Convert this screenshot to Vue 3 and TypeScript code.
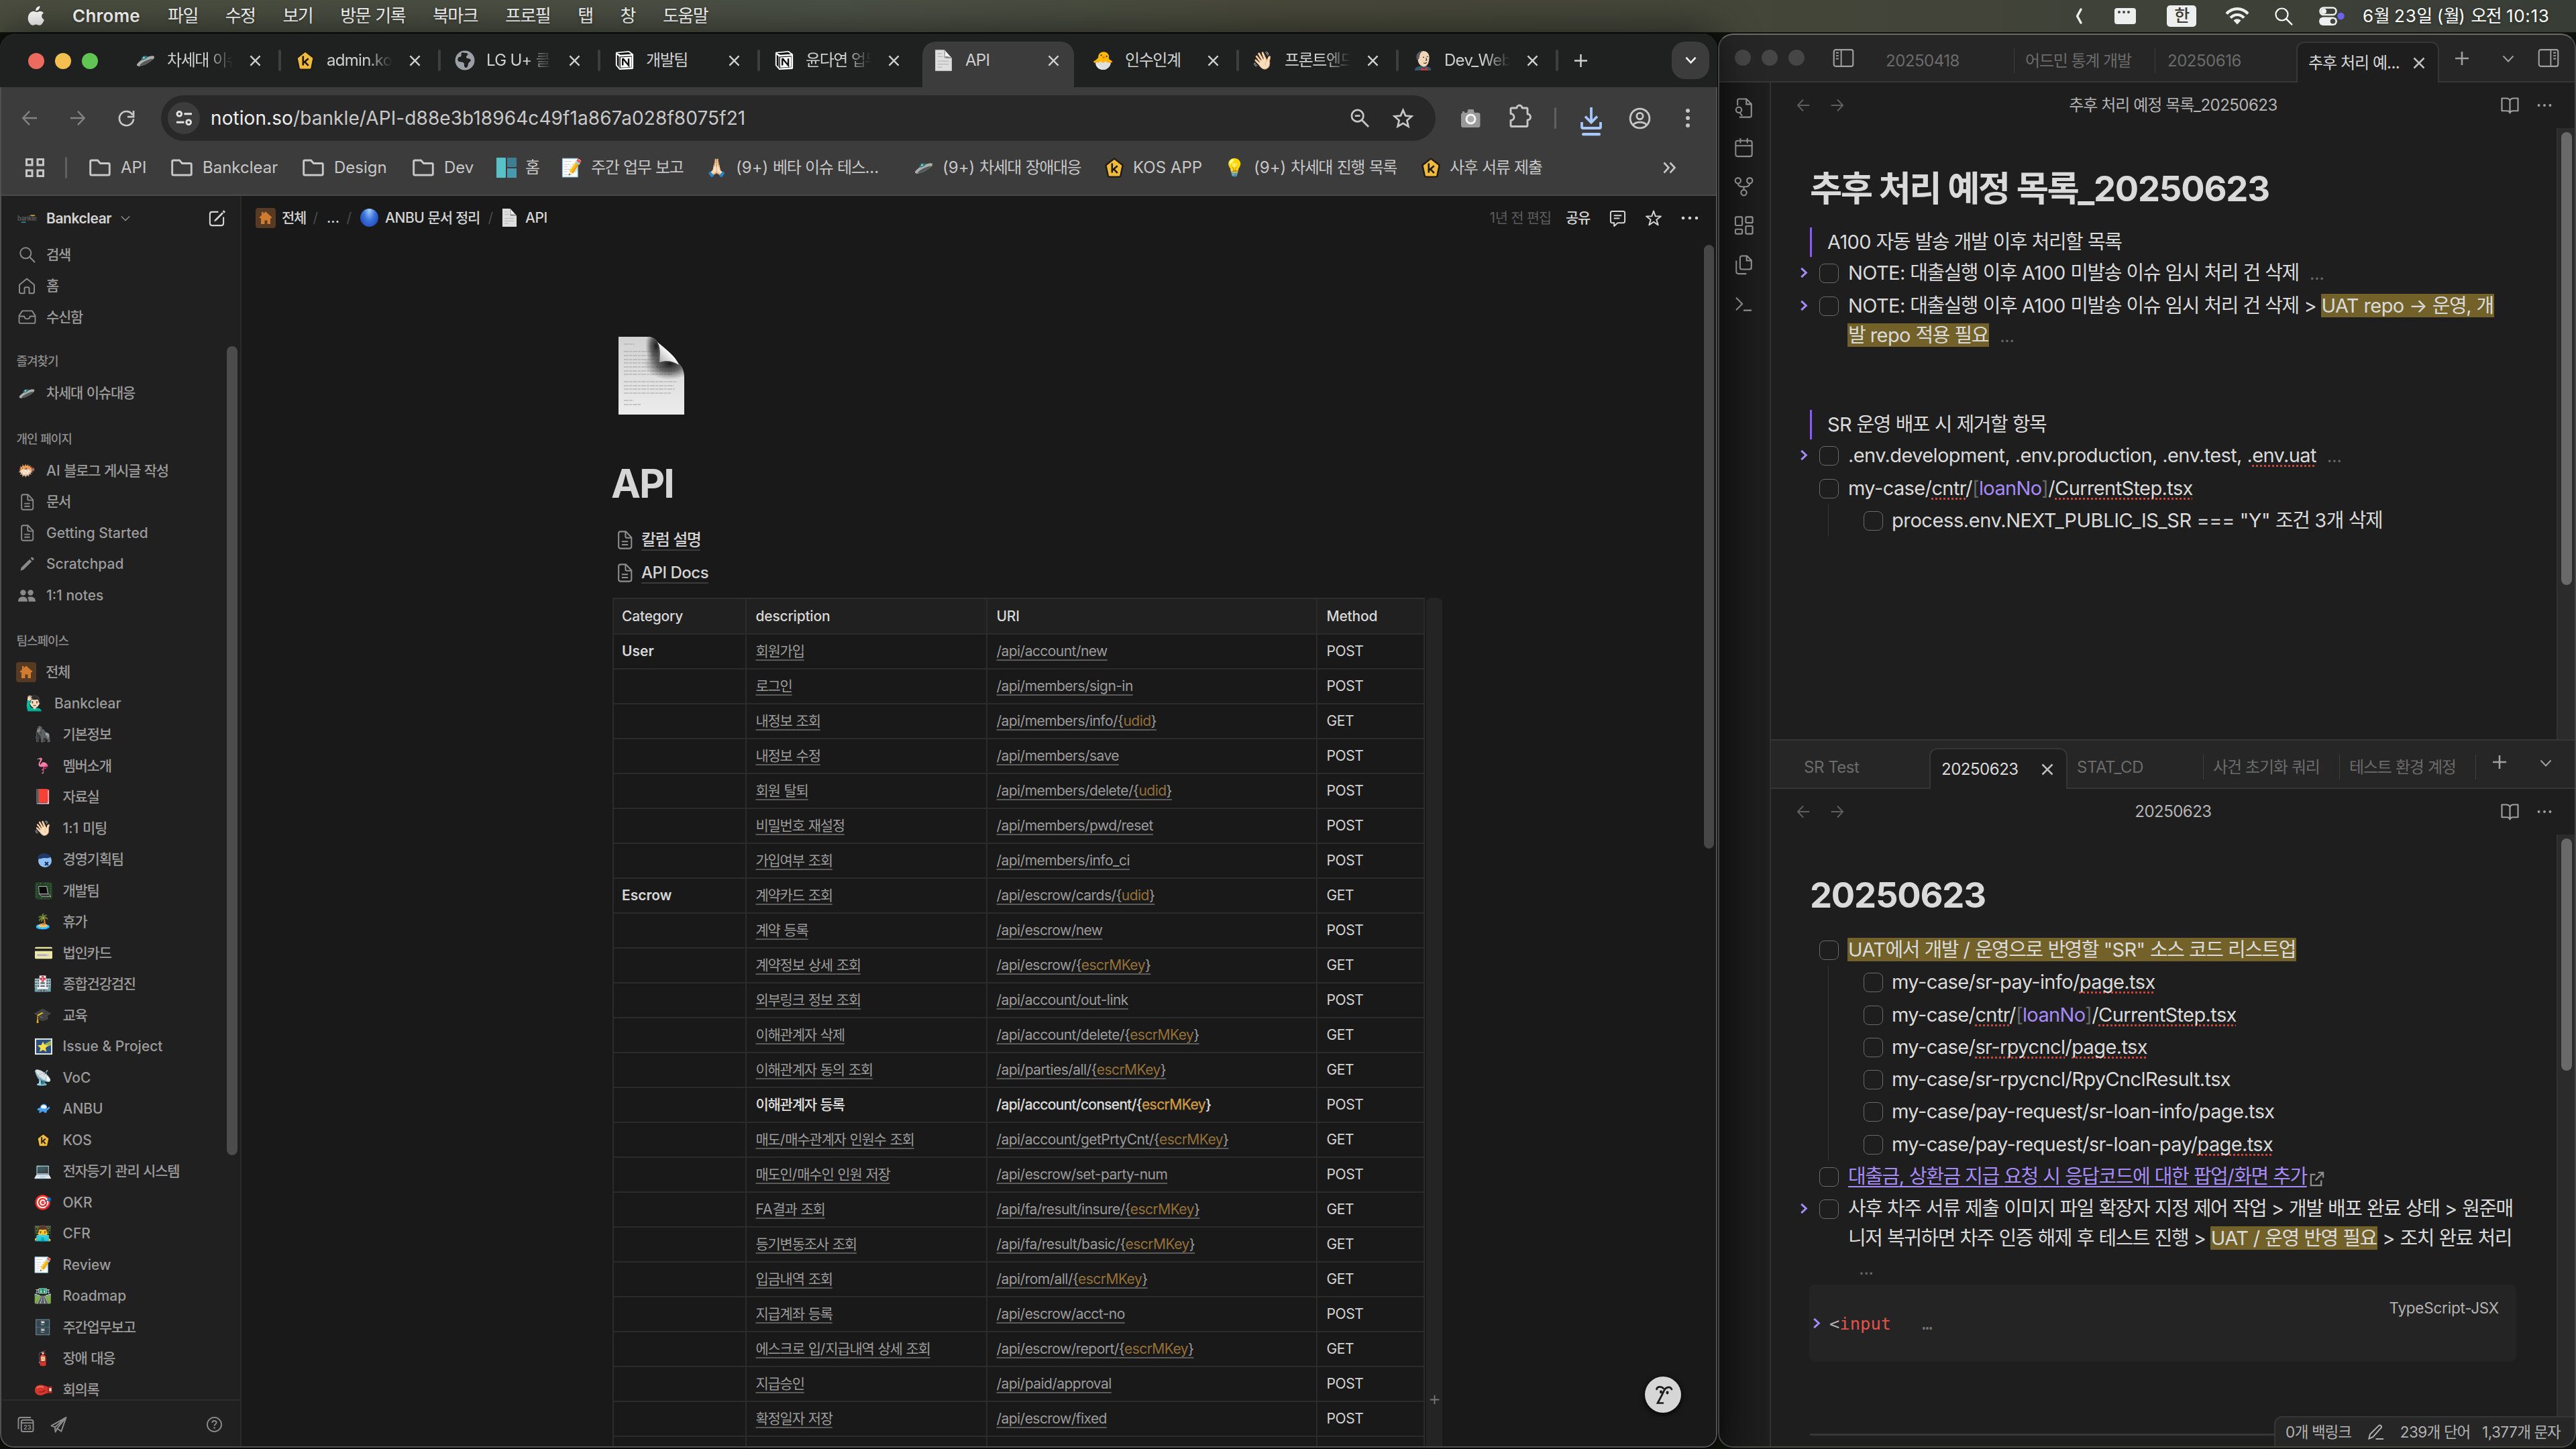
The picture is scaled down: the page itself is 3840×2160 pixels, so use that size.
<script setup lang="ts">
import { h, type FunctionalComponent } from 'vue'

/* Splits a string into Hangul and Latin runs so each script gets its own tracking. */
const Tx: FunctionalComponent<{ t: string }> = (props) =>
  h(
    'span',
    { class: 'tx' },
    (props.t.match(/[가-힣]+|[^가-힣]+/g) ?? []).map((run) =>
      /[가-힣]/.test(run) ? h('span', { class: 'ko' }, run) : run,
    ),
  )
Tx.props = ['t']

const icons: Record<string, [string, string]> = {
  apple: ['0 0 26 32', '<path fill="#fff" d="M18.6 1c.2 2-.6 3.900-1.800 5.200-1.200 1.400-3 2.400-4.700 2.300-.2-1.900.7-3.900 1.800-5.100C15.100 2 17.100 1.100 18.600 1zM24.500 11.500c-1.900 1.200-3 2.900-3 5.100 0 2.500 1.500 4.700 3.800 5.500-.5 1.600-1.300 3.200-2.300 4.700-1.400 2-2.800 4-5 4-2.100 0-2.800-1.300-5.300-1.300s-3.300 1.300-5.400 1.300c-2.100 0-3.600-2.100-5-4.100C-.7 22.400-.2 15 3.300 11.500c1.500-1.600 3.500-2.500 5.400-2.500 2.100 0 3.500 1.300 5.200 1.300 1.700 0 2.800-1.300 5.300-1.300 2 0 4 1 5.300 2.500z"/>'],
  mchev: ['0 0 12 24', '<path d="M9 2 3.500 12 9 22" fill="none" stroke="#eee" stroke-width="3.400" stroke-linecap="round" stroke-linejoin="round"/>'],
  mwin: ['0 0 32 26', '<rect x="0" y="1" width="32" height="24" rx="4" fill="#eee"/><circle cx="7" cy="7" r="2" fill="#444"/><circle cx="14" cy="7" r="2" fill="#444"/><circle cx="21" cy="7" r="2" fill="#444"/>'],
  wifi: ['0 0 36 26', '<g fill="none" stroke="#eee" stroke-width="4.200"><path d="M2 9.500C11-.3 25-.3 34 9.500"/><path d="M8 15.500c5.700-6 14.300-6 20 0"/></g><path d="M12.500 19.500c3.200-3 7.800-3 11 0L18 25.500z" fill="#eee"/>'],
  search: ['0 0 28 28', '<circle cx="11.500" cy="11.500" r="9" fill="none" stroke="currentColor" stroke-width="2.200"/><path d="m18.300 18.300 8 8" stroke="currentColor" stroke-width="2.400" stroke-linecap="round"/>'],
  control: ['0 0 38 28', '<rect x="1.500" y="1.500" width="24" height="10.500" rx="5.200" fill="none" stroke="#eee" stroke-width="2.600"/><circle cx="7" cy="6.800" r="4" fill="#eee"/><rect x="0" y="15.500" width="27" height="12.500" rx="6.200" fill="#eee"/><circle cx="20.500" cy="21.700" r="3.800" fill="#444"/><circle cx="32.500" cy="14" r="5.200" fill="#6b62f0"/>'],
  x: ['0 0 18 18', '<path d="m1.500 1.500 15 15m0-15-15 15" stroke="currentColor" stroke-width="2.500" fill="none"/>'],
  plus: ['0 0 22 22', '<path d="M11 1v20M1 11h20" stroke="currentColor" stroke-width="2.600" fill="none"/>'],
  down: ['0 0 18 12', '<path d="m1.500 1.500 7.500 8 7.500-8" stroke="currentColor" stroke-width="2.800" fill="none"/>'],
  thin: ['0 0 18 12', '<path d="m1.500 1.500 7.500 8 7.500-8" stroke="currentColor" stroke-width="2" fill="none"/>'],
  left: ['0 0 26 26', '<path d="M25 13H3M13 2 2.500 13 13 24" stroke="currentColor" stroke-width="2.600" fill="none"/>'],
  right: ['0 0 26 26', '<path d="M1 13h22M13 2l10.500 11L13 24" stroke="currentColor" stroke-width="2.600" fill="none"/>'],
  reload: ['0 0 26 26', '<path d="M22.500 7.500A11 11 0 1 0 24 14" stroke="currentColor" stroke-width="2.800" fill="none"/><path d="M24 1v9.500h-9.500" stroke="currentColor" stroke-width="2.800" fill="none"/>'],
  tune: ['0 0 26 24', '<g fill="none" stroke="currentColor" stroke-width="3"><circle cx="5.500" cy="5" r="3.500"/><path d="M13 5h12M1 18h12"/><circle cx="20" cy="18" r="3.500"/></g>'],
  zoomout: ['0 0 30 30', '<g fill="none" stroke="currentColor" stroke-width="2.800"><circle cx="11" cy="11" r="9"/><path d="M7 11h8M17.500 17.500 28 28"/></g>'],
  star: ['0 0 30 30', '<path d="m15 3 3.500 8.200 8.900.8-6.700 5.900 2 8.700-7.700-4.600-7.700 4.600 2-8.700L2.600 12l8.900-.8z" fill="none" stroke="currentColor" stroke-width="2.600"/>'],
  camera: ['0 0 30 30', '<path d="M1 10c0-1.500.8-2.500 2-2.500V5h3v2h4l1.500-5h8L21 7h5.500C28 7 29.500 8 29.500 10v16c0 2-1 3-3 3H4c-2 0-3-1-3-3z" fill="#999"/><circle cx="15.500" cy="16.500" r="6.500" fill="#aaa" stroke="#f4f4f4" stroke-width="3"/>'],
  puzzle: ['0 0 34 36', '<path d="M3 7.500C3 6.500 3.500 6 4.500 6H12a4 4 0 0 1 8 0h6.500c1 0 1.500.5 1.500 1.500V15a4.500 4.500 0 0 1 0 9v8c0 1-.5 1.500-1.500 1.500h-22C3.500 33.500 3 33 3 32v-7.500a5 5 0 0 0 0-10z" fill="none" stroke="currentColor" stroke-width="2.900" stroke-linejoin="round"/>'],
  download: ['0 0 32 46', '<g fill="none" stroke="#a8c7fa" stroke-width="3.800"><path d="M16 1v22M7 14.500l9 9 9-9"/><path d="M2 23v7.500c0 1 .5 1.500 1.500 1.500h25c1 0 1.500-.5 1.500-1.500V23"/></g><rect x="2" y="39" width="28" height="4.300" rx="2" fill="#a8c7fa"/>'],
  avatar: ['0 0 34 34', '<g fill="none" stroke="currentColor" stroke-width="2.900"><circle cx="17" cy="17" r="14.800"/><circle cx="17" cy="13.500" r="4.800"/><path d="M6.500 27c5-5.500 16-5.500 21 0"/></g>'],
  kebab: ['0 0 8 30', '<g fill="currentColor"><circle cx="4" cy="4" r="3"/><circle cx="4" cy="15" r="3"/><circle cx="4" cy="26" r="3"/></g>'],
  apps: ['0 0 28 28', '<g fill="none" stroke="currentColor" stroke-width="3"><rect x="1.500" y="1.500" width="8.500" height="8.500"/><rect x="18" y="1.500" width="8.500" height="8.500"/><rect x="1.500" y="18" width="8.500" height="8.500"/><rect x="18" y="18" width="8.500" height="8.500"/></g>'],
  folder: ['0 0 32 26', '<path d="M3.500 2h9l4 4.500h12c1 0 1.800.8 1.800 1.800v13.900c0 1-.8 1.800-1.800 1.800h-25c-1 0-1.800-.8-1.800-1.800V3.800C1.700 2.800 2.500 2 3.500 2z" fill="none" stroke="currentColor" stroke-width="2.900"/>'],
  more: ['0 0 20 18', '<path d="m1.500 1.500 7 7.500-7 7.500M10.500 1.500l7 7.500-7 7.500" stroke="currentColor" stroke-width="2.600" fill="none"/>'],
  home3: ['0 0 30 30', '<rect width="14" height="30" rx="1" fill="#58c0c7"/><rect x="16" width="14" height="14" fill="#3d7e92"/><rect x="16" y="16" width="14" height="14" fill="#4699ae"/>'],
  kos: ['0 0 30 32', '<path d="M15 1.500 28.500 12 25 28.500c-.4 1.500-1.500 2-3 2H8c-1.500 0-2.600-.5-3-2L1.500 12z" fill="#f0bb3c" stroke="#1f1a12" stroke-width="2.600" stroke-linejoin="round"/><path d="M11.500 9v15M20 13l-8 7M14.500 18.500l5.500 6" stroke="#1f1a12" stroke-width="2.800" fill="none"/>'],
  globe: ['0 0 28 28', '<circle cx="14" cy="14" r="13.500" fill="#9aa0a6"/><path d="M11 3c3 1 6 0 7 2s-3 3-2 5 5 1 6 3-2 3-3 5 0 5-3 6-3-3-3-5-3-3-5-3-4-1-4-3 1-4 3-4 2-1 2-3 0-3 2-3z" fill="#1f2120"/>'],
  notion: ['0 0 32 32', '<path d="m3 3 20-2 7 5v22c0 1-.5 1.700-2 1.800L8 31l-6-7V5c0-1.200.3-1.900 1-2z" fill="#fff"/><path d="m4.500 4.500 18-1.500 4 3-17 1.200zM8 10l19.500-1.300V27L8 28.500z" fill="#111"/><path d="m4 7 3 2.500V27l-3-3.500z" fill="#111"/><path d="M9.500 11.200 27 10v16.300L9.500 27.500z" fill="#fff"/><path d="M13 24V14l1-.2L22.500 24V13" stroke="#111" stroke-width="2.600" fill="none"/>'],
  jenkins: ['0 0 28 32', '<path d="M1 32c0-4 3-6 8-7h10c5 1 8 3 8 7z" fill="#39566b"/><path d="M6 10C6 4 10 1 14.500 1S24 4 24 11c0 7-2 15-8.500 15C10 26 6 20 6 15z" fill="#f0d6b7"/><path d="M4 14C2 6 7 1 14 1 9 4 9 8 8 13l-2 2z" fill="#5a5a62"/><path d="m11 28 5 2 5-3v5h-10z" fill="#d33833"/><path d="M14 11h2m4-1h2M15 20c2 1 4 1 5-1M19 12l1 4h-2" stroke="#3a2f28" stroke-width="1.200" fill="none"/>'],
  house: ['0 0 30 30', '<rect width="30" height="30" rx="4" fill="#563a24"/><path d="M15 5.500 24.500 14l-1 1.200H22V24h-4.500v-5.500h-4V24H8v-8.800H6.500L5.500 14 9 10.800V6h2.500v2.600z" fill="#cf7c30"/>'],
  page: ['0 0 24 28', '<path d="M1 0h12l10 11v17H1z" fill="#dedede"/><path d="M12 0c2 3 1 8 1 10s6 1 10 1z" fill="#8a8a8a"/><path d="M13 0c2 3 1 6 1 9 3-1 6 0 9 2z" fill="#f6f6f6"/><path d="M4 5h6M4 9h7M4 15h15M4 19h15M4 23h6" stroke="#b5b5b5"/>'],
  doc: ['0 0 24 30', '<g fill="none" stroke="currentColor" stroke-width="2.200"><path d="M5 1.500h8.500l9 9.500v14.500c0 2-1 3-3 3H5c-2 0-3-1-3-3V4.500c0-2 1-3 3-3z"/><path d="M13 2v7.500c0 1.500.8 2 2 2h7M7 17.500h10M7 22.500h10"/></g>'],
  nhome: ['0 0 26 26', '<path d="M2 11.500 13 2.500l11 9V22c0 1.500-1 2.300-2.300 2.300H16.500V17c0-1-.5-1.700-1.500-1.700h-4c-1 0-1.500.7-1.500 1.700v7.300H4.300C3 24.300 2 23.500 2 22z" fill="none" stroke="currentColor" stroke-width="2" stroke-linejoin="round"/>'],
  inbox: ['0 0 28 24', '<path d="M6.500 2.500h15L26.500 10v9.500c0 1.500-1 2.300-2.300 2.300H3.800c-1.300 0-2.300-.8-2.300-2.300V10zM1.500 11h8c.5 3 2 4 4.500 4s4-1 4.500-4h8" fill="none" stroke="currentColor" stroke-width="2" stroke-linejoin="round"/>'],
  compose: ['0 0 26 26', '<path d="M15 3H5.500C3.500 3 2 4.500 2 6.500v14C2 22.500 3.500 24 5.500 24h14c2 0 3.500-1.500 3.500-3.500V11" fill="none" stroke="currentColor" stroke-width="2.200"/><path d="m8.500 18 1-3L21 3.500l2 2L11.500 17z" fill="currentColor"/><path d="m22.500 2.300 1-1 1.500 1.500-1 1z" stroke="currentColor" stroke-width="1.500"/>'],
  pencil: ['0 0 24 24', '<path d="m1.500 22.500 1.500-5L16.500 4l3.500 3.500L6.500 21zM18 2.500l1.500-1.500c.6-.6 1.500-.5 2 0l1.500 1.500c.6.600.6 1.500 0 2L21.500 6z" fill="currentColor"/>'],
  people: ['0 0 28 20', '<g fill="currentColor"><circle cx="8" cy="5" r="4.500"/><circle cx="20" cy="5" r="4.500"/><path d="M0 19.500C0 14 3 11.500 8 11.500c4 0 7 2.500 7 8z"/><path d="M17 19.500c0-3-.6-5-2-6.800 1.300-.8 3-1.200 5-1.200 5 0 8 2.500 8 8z"/></g>'],
  clock23: ['0 0 26 26', '<g fill="none" stroke="currentColor" stroke-width="2"><rect x="6" y="6" width="18.500" height="18" rx="3"/><path d="M21 2H5C3 2 1.500 3.500 1.500 5.500V20M6 10.500h18"/></g><text x="15.300" y="21" font-size="9.500" font-weight="700" text-anchor="middle" fill="currentColor" font-family="Inter">23</text>'],
  send: ['0 0 26 26', '<path d="M1.500 15 24.500 2 17 23.500l-6.500-4.500L8 24.500 7 17zm6 2L24 2.500 10.500 19" fill="none" stroke="currentColor" stroke-width="2" stroke-linejoin="round"/>'],
  help: ['0 0 26 26', '<circle cx="13" cy="13" r="11" fill="none" stroke="currentColor" stroke-width="1.900"/><path d="M9.700 10.500c0-2 1.500-3.200 3.300-3.200s3.300 1 3.300 2.900c0 2.300-3.300 2.300-3.300 4.800" fill="none" stroke="currentColor" stroke-width="1.900"/><circle cx="13" cy="18.300" r="1.300" fill="currentColor"/>'],
  comment: ['0 0 26 27', '<path d="M4.500 2h17c1.500 0 2.500 1 2.500 2.500v13c0 1.500-1 2.500-2.500 2.500H13l-5.500 5V20h-3C3 20 2 19 2 17.500v-13C2 3 3 2 4.500 2zM7 8.500h12M7 13h9" fill="none" stroke="currentColor" stroke-width="2.100" stroke-linejoin="round"/>'],
  nstar: ['0 0 26 26', '<path d="m13 2.500 2.700 7.800 8.200.2-6.600 5 2.400 7.900-6.700-4.700-6.700 4.700 2.400-7.900-6.600-5 8.200-.2z" fill="none" stroke="currentColor" stroke-width="2" stroke-linejoin="round"/>'],
  dots: ['0 0 26 6', '<g fill="currentColor"><circle cx="3" cy="3" r="2.300"/><circle cx="13" cy="3" r="2.300"/><circle cx="23" cy="3" r="2.300"/></g>'],
  bluecap: ['0 0 26 26', '<circle cx="15" cy="15" r="10" fill="#8fc0f5"/><path d="M4 11C6 3 17 1 24 9c-4 4-9 1-13 2.500-3 1.300-6 1-7-.5z" fill="#1f3a6b"/><path d="m15 17 5 5m0-5-5 5" stroke="#17305c" stroke-width="2.200"/>'],
  matrix: ['0 0 28 28', '<rect width="28" height="28" rx="5" fill="#27402a"/><path d="M3 2v24M9 1v5M17 1v6M21 2v24M25 2v24M10 24v4" stroke="#3f8a44" stroke-dasharray="2 2"/><path d="M6 7h13l2 12H7z" fill="#0b0b0b" stroke="#bbb"/><path d="m7 19 15 0 4 4H11z" fill="#333" stroke="#ccc" stroke-width=".8"/>'],
  card: ['0 0 28 20', '<rect width="28" height="19" rx="2" fill="#ece6a8"/><rect y="2.500" width="28" height="4" fill="#26251c"/><path d="M3 11h20v4H3z" fill="#cfcfcf"/><path d="M4 13h15" stroke="#888"/>'],
  turtle: ['0 0 26 22', '<path d="M2 12c1-3 3-3 5-3 1-5 4-7 7-7s6 2 6 7c2 1 2-3 4-2s1 5-3 6c-1 2-2 3-2 5h-4l-1-2h-4l-1 2H5l1-4c-2 0-4 0-4-2z" fill="#48a0ef"/><path d="M9 6c2-3 8-3 10 0v3c-3 2-7 2-10 0z" fill="#f3f7fb"/>'],
  ufo: ['0 0 30 24', '<ellipse cx="15" cy="13" rx="14.500" ry="4.400" transform="rotate(-27 15 13)" fill="#a9adab"/><ellipse cx="16" cy="14.800" rx="11" ry="2.200" transform="rotate(-27 16 14.800)" fill="#55595a"/><path d="M9 11.500c-1.500-5 6-8.500 9.500-4.500-2 2.500-6 4.500-9.500 4.500z" fill="#35757b"/><circle cx="12.500" cy="8" r="1.500" fill="#86d4da"/>'],
  shoot: ['0 0 28 26', '<rect width="28" height="26" fill="#f3f3ee"/><rect x="2" y="2" width="24" height="22" fill="#2a4f80"/><path d="M26 3v8l-9 3-3-4z" fill="#9fb25a"/><path d="m13 5 2.600 5.600 6.200.6-4.700 4.200 1.500 6.200-5.600-3.300-5.500 3.300 1.400-6.200L4.200 11.200l6.200-.6z" fill="#f8dc4c"/>'],
  glove: ['0 0 28 20', '<path d="M0 10C0 4 5 1.500 11 2c4 .3 6 2.500 10 2.500V15c-5 .5-7 3.500-12 3.500S0 16 0 10z" fill="#d5372c"/><path d="M3 7c3-3 8-3 11-1" stroke="#f08376" stroke-width="1.500" fill="none"/><path d="M6 13c4 1 8 0 11-3" stroke="#8e1e18" stroke-width="1.300" fill="none"/><path d="M21 4.500 27.500 4v11l-6.500.5z" fill="#b3261e"/><rect x="23" y="7" width="3.500" height="5" fill="#ddd"/>'],
  bankle: ['0 0 30 12', '<text x="0" y="9" font-size="10" font-weight="700" fill="#555" font-family="Inter" textLength="30">bankle</text><path d="M20 1h7" stroke="#d8a93a" stroke-width="1.600"/><path d="M6 11.500h7" stroke="#2f8f9f" stroke-width="1.600"/>'],
  nchev: ['0 0 16 10', '<path d="m1 1.500 7 7 7-7" stroke="currentColor" stroke-width="1.800" fill="none"/>'],
  sideL: ['0 0 32 28', '<rect x="1.200" y="1.200" width="29.600" height="25.600" rx="3" fill="none" stroke="currentColor" stroke-width="2.200"/><path d="M12.500 1v26M4.500 6h4M4.500 10.500h4M4.500 15h4" stroke="currentColor" stroke-width="2"/>'],
  sideR: ['0 0 32 28', '<rect x="1.200" y="1.200" width="29.600" height="25.600" rx="3" fill="none" stroke="currentColor" stroke-width="2.200"/><path d="M19.500 1v26M23.500 6h4M23.500 10.500h4M23.500 15h4" stroke="currentColor" stroke-width="2"/>'],
  r1: ['0 0 30 32', '<g fill="none" stroke="currentColor" stroke-width="2.200"><path d="M5 12V4c0-1.500 1-2.500 2.500-2.500H19l8 8V28c0 1.500-1 2.500-2.500 2.500H8M19 2v8h8"/><circle cx="7" cy="19" r="4.500"/><path d="m8.500 23.500 4 5"/></g>'],
  r2: ['0 0 30 32', '<g fill="none" stroke="currentColor" stroke-width="2.200"><rect x="2" y="5" width="26" height="25" rx="3"/><path d="M2 13h26M9.500 1v8M20.500 1v8"/></g>'],
  r3: ['0 0 30 30', '<g fill="none" stroke="currentColor" stroke-width="2.200"><circle cx="6" cy="6" r="4.300"/><circle cx="24" cy="6" r="4.300"/><circle cx="15" cy="24.500" r="4.300"/><path d="M6 10.500c0 4 3 5 9 5s9-1 9-5M15 15v5.500"/></g>'],
  r4: ['0 0 30 30', '<g fill="none" stroke="currentColor" stroke-width="2.200"><rect x="2" y="2" width="10.500" height="13" rx="1.500"/><rect x="18" y="2" width="10.500" height="9" rx="1.500"/><rect x="2" y="21" width="10.500" height="7" rx="1.500"/><rect x="18" y="16" width="10.500" height="12" rx="1.500"/></g>'],
  r5: ['0 0 30 32', '<g fill="none" stroke="currentColor" stroke-width="2.200"><path d="M9 5c0-2 1-3.500 3-3.500h8l7 7V20c0 2-1 3-3 3H12c-2 0-3-1-3-3zM19.500 2v7H27M3 9v17.500C3 29 4 30 6.500 30H19"/></g>'],
  r6: ['0 0 28 24', '<path d="m2 2 10 10L2 22M14 22.500h13" fill="none" stroke="currentColor" stroke-width="2.200"/>'],
  book: ['0 0 28 26', '<path d="M14 5c-1-2.500-3-3.500-5.500-3.500H1.500V21H9c3 0 4.500 1 5 3.500.5-2.500 2-3.500 5-3.500h7.500V1.500h-7C17 1.500 15 2.500 14 5zm0 0v19" fill="none" stroke="currentColor" stroke-width="2.200" stroke-linejoin="round"/>'],
  fold: ['0 0 12 18', '<path d="m2 2 7.500 7L2 16" fill="none" stroke="currentColor" stroke-width="3.200"/>'],
  ext: ['0 0 24 24', '<path d="M10 5H3v17h16v-8M14 2h8v8M22 2 10 14" fill="none" stroke="currentColor" stroke-width="2.400"/>'],
  edit: ['0 0 26 26', '<path d="M2.500 23.500 4 17 18 3c1.500-1.500 5 1.500 3.500 3.500L8.500 21zM13 24h12" fill="none" stroke="currentColor" stroke-width="2"/>'],
  face: ['0 0 54 54', '<g fill="none" stroke="#191919" stroke-width="2.700" stroke-linecap="round"><path d="M17.500 19c.5-4 7-5 10-1.500"/><path d="M40 19c-2.500-5-9-3.500-11.500 2-1.500 4-7 14-9.500 18.500h8"/></g><ellipse cx="24" cy="23" rx="2" ry="2.400" fill="#191919"/><ellipse cx="33.500" cy="24" rx="2" ry="2.400" fill="#191919"/>'],
}

const menus = ['파일', '수정', '보기', '방문 기록', '북마크', '프로필', '탭', '창', '도움말']

interface Tab { icon?: string; emoji?: string; t: string; fade?: boolean; on?: boolean; nosep?: boolean }
const tabs: Tab[] = [
  { icon: 'ufo', t: '차세대 이슈', fade: true },
  { icon: 'kos', t: 'admin.kos', fade: true },
  { icon: 'globe', t: 'LG U+ 클', fade: true },
  { icon: 'notion', t: '개발팀' },
  { icon: 'notion', t: '윤다연 업무', fade: true, nosep: true },
  { icon: 'page', t: 'API', on: true, nosep: true },
  { emoji: '🐣', t: '인수인계' },
  { emoji: '👋🏻', t: '프론트엔드', fade: true },
  { icon: 'jenkins', t: 'Dev_Web', fade: true },
]

interface Mark { icon?: string; emoji?: string; t: string; w: number }
const marks: Mark[] = [
  { icon: 'folder', t: 'API', w: 122 },
  { icon: 'folder', t: 'Bankclear', w: 196 },
  { icon: 'folder', t: 'Design', w: 164 },
  { icon: 'folder', t: 'Dev', w: 124 },
  { icon: 'home3', t: '홈', w: 98 },
  { emoji: '📝', t: '주간 업무 보고', w: 216 },
  { emoji: '🙏🏻', t: '(9+) 베타 이슈 테스...', w: 308 },
  { icon: 'ufo', t: '(9+) 차세대 장애대응', w: 284 },
  { icon: 'kos', t: 'KOS APP', w: 180 },
  { emoji: '💡', t: '(9+) 차세대 진행 목록', w: 292 },
  { icon: 'kos', t: '사후 서류 제출', w: 200 },
]

interface Nav { icon?: string; emoji?: string; t: string; lv?: number }
const personal: Nav[] = [
  { emoji: '🐡', t: 'AI 블로그 게시글 작성' },
  { icon: 'doc', t: '문서' },
  { icon: 'doc', t: 'Getting Started' },
  { icon: 'pencil', t: 'Scratchpad' },
  { icon: 'people', t: '1:1 notes' },
]
const team: Nav[] = [
  { icon: 'house', t: '전체', lv: 0 },
  { emoji: '🙋🏻‍♂️', t: 'Bankclear', lv: 1 },
  { emoji: '🦍', t: '기본정보', lv: 2 },
  { emoji: '🦩', t: '멤버소개', lv: 2 },
  { emoji: '📕', t: '자료실', lv: 2 },
  { emoji: '👋🏻', t: '1:1 미팅', lv: 2 },
  { icon: 'bluecap', t: '경영기획팀', lv: 2 },
  { icon: 'matrix', t: '개발팀', lv: 2 },
  { emoji: '🏝️', t: '휴가', lv: 2 },
  { icon: 'card', t: '법인카드', lv: 2 },
  { emoji: '🏥', t: '종합건강검진', lv: 2 },
  { emoji: '🎓', t: '교육', lv: 2 },
  { icon: 'shoot', t: 'Issue & Project', lv: 2 },
  { emoji: '📡', t: 'VoC', lv: 2 },
  { icon: 'turtle', t: 'ANBU', lv: 2 },
  { icon: 'kos', t: 'KOS', lv: 2 },
  { emoji: '💻', t: '전자등기 관리 시스템', lv: 2 },
  { emoji: '🎯', t: 'OKR', lv: 2 },
  { emoji: '👨‍💻', t: 'CFR', lv: 2 },
  { emoji: '📝', t: 'Review', lv: 2 },
  { emoji: '🛣️', t: 'Roadmap', lv: 2 },
  { emoji: '🗄️', t: '주간업무보고', lv: 2 },
  { emoji: '🧯', t: '장애 대응', lv: 2 },
  { icon: 'glove', t: '회의록', lv: 2 },
]

/* category, description, path, path parameter, method, emphasised */
const rows: [string, string, string, string, string, boolean?][] = [
  ['User', '회원가입', '/api/account/new', '', 'POST'],
  ['', '로그인', '/api/members/sign-in', '', 'POST'],
  ['', '내정보 조회', '/api/members/info/', 'udid', 'GET'],
  ['', '내정보 수정', '/api/members/save', '', 'POST'],
  ['', '회원 탈퇴', '/api/members/delete/', 'udid', 'POST'],
  ['', '비밀번호 재설정', '/api/members/pwd/reset', '', 'POST'],
  ['', '가입여부 조회', '/api/members/info_ci', '', 'POST'],
  ['Escrow', '계약카드 조회', '/api/escrow/cards/', 'udid', 'GET'],
  ['', '계약 등록', '/api/escrow/new', '', 'POST'],
  ['', '계약정보 상세 조회', '/api/escrow/', 'escrMKey', 'GET'],
  ['', '외부링크 정보 조회', '/api/account/out-link', '', 'POST'],
  ['', '이해관계자 삭제', '/api/account/delete/', 'escrMKey', 'GET'],
  ['', '이해관계자 동의 조회', '/api/parties/all/', 'escrMKey', 'GET'],
  ['', '이해관계자 등록', '/api/account/consent/', 'escrMKey', 'POST', true],
  ['', '매도/매수관계자 인원수 조회', '/api/account/getPrtyCnt/', 'escrMKey', 'GET'],
  ['', '매도인/매수인 인원 저장', '/api/escrow/set-party-num', '', 'POST'],
  ['', 'FA결과 조회', '/api/fa/result/insure/', 'escrMKey', 'GET'],
  ['', '등기변동조사 조회', '/api/fa/result/basic/', 'escrMKey', 'GET'],
  ['', '입금내역 조회', '/api/rom/all/', 'escrMKey', 'GET'],
  ['', '지급계좌 등록', '/api/escrow/acct-no', '', 'POST'],
  ['', '에스크로 입/지급내역 상세 조회', '/api/escrow/report/', 'escrMKey', 'GET'],
  ['', '지급승인', '/api/paid/approval', '', 'POST'],
  ['', '확정일자 저장', '/api/escrow/fixed', '', 'POST'],
  ['', '환불/해지 내역 조회', '/api/account/cancel-info/', 'escrMKey', 'GET'],
]

/* [text, style]; a style of "br" is a line break */
type Run = [string, string?]
interface Task { fold?: boolean; sub?: boolean; runs: Run[] }
const topA: Task[] = [
  { fold: true, runs: [['NOTE: 대출실행 이후 A100 미발송 이슈 임시 처리 건 삭제'], ['...', 'el']] },
  { fold: true, runs: [['NOTE: 대출실행 이후 A100 미발송 이슈 임시 처리 건 삭제 > '], ['UAT repo → 운영, 개', 'hl'], ['', 'br'], ['발 repo 적용 필요', 'hl'], ['...', 'el']] },
]
const topB: Task[] = [
  { fold: true, runs: [['.env.development, .env.production, .env.test, .'], ['env.uat', 'sp'], ['...', 'el']] },
  { runs: [['my-case/'], ['cntr', 'sp'], ['/'], ['[', 'dim'], ['loanNo', 'lk'], [']', 'dim'], ['/'], ['CurrentStep.tsx', 'sp']] },
  { sub: true, runs: [['process.env.NEXT_PUBLIC_IS_SR === "Y" 조건 3개 삭제', 'wide']] },
]
const bottom: Task[] = [
  { runs: [['UAT에서 개발 / 운영으로 반영할 "SR" 소스 코드 리스트업', 'hl']] },
  { sub: true, runs: [['my-case/sr-pay-info/'], ['page.tsx', 'sp']] },
  { sub: true, runs: [['my-case/'], ['cntr', 'sp'], ['/'], ['[', 'dim'], ['loanNo', 'lk'], [']', 'dim'], ['/'], ['CurrentStep.tsx', 'sp']] },
  { sub: true, runs: [['my-case/'], ['sr-rpycncl', 'sp'], ['/'], ['page.tsx', 'sp']] },
  { sub: true, runs: [['my-case/sr-rpycncl/RpyCnclResult.tsx']] },
  { sub: true, runs: [['my-case/pay-request/sr-loan-info/page.tsx']] },
  { sub: true, runs: [['my-case/pay-request/sr-loan-pay/'], ['page.tsx', 'sp']] },
  { runs: [['대출금, 상환금 지급 요청 시 응답코드에 대한 팝업/화면 추가', 'url'], ['', 'ext']] },
  { fold: true, runs: [['사후 차주 서류 제출 이미지 파일 확장자 지정 제어 작업 > 개발 배포 완료 상태 > 원준매'], ['', 'br'], ['니저 복귀하면 차주 인증 해제 후 테스트 진행 > '], ['UAT / 운영 반영 필요', 'hl'], [' > 조치 완료 처리'], ['', 'br'], ['...', 'el']] },
]

const Ic: FunctionalComponent<{ n: string }> = (props) =>
  h('svg', { class: 'ic ic-' + props.n, viewBox: icons[props.n][0], innerHTML: icons[props.n][1] })
Ic.props = ['n']

const Tasks: FunctionalComponent<{ list: Task[] }> = (props) =>
  props.list.map((task) =>
    h('div', { class: ['task', { sub: task.sub }] }, [
      task.fold ? h('span', { class: 'foldmark' }, h(Ic, { n: 'fold' })) : null,
      h('span', { class: 'box' }),
      h('span', { class: 'body' }, task.runs.map(([t, c]) =>
        c === 'br' ? h('br') : c === 'ext' ? h(Ic, { n: 'ext' }) : h(Tx, { t, class: c }))),
    ]))
Tasks.props = ['list']
</script>

<template>
  <div class="desk">
    <header class="menubar">
      <Ic n="apple" />
      <b class="app">Chrome</b>
      <Tx v-for="m in menus" :key="m" :t="m" />
      <span class="grow" />
      <Ic n="mchev" /><Ic n="mwin" /><span class="lang"><Tx t="한" /></span><Ic n="wifi" /><Ic n="search" /><Ic n="control" />
      <Tx class="clock" t="6월 23일 (월) 오전 10:13" />
    </header>

    <section class="win obs">
      <div class="obar top">
        <span class="gray"><i /><i /><i /></span>
        <Ic n="sideL" />
        <div class="otabs">
          <span class="otab"><Tx t="20250418" /></span>
          <span class="otab"><Tx t="어드민 통계 개발" /></span>
          <span class="otab nosep"><Tx t="20250616" /></span>
          <span class="otab on"><Tx t="추후 처리 예..." /><Ic n="x" /></span>
        </div>
        <Ic n="plus" /><Ic n="thin" /><Ic n="sideR" />
      </div>
      <div class="obody">
        <nav class="ribbon"><span v-for="n in ['r1', 'r2', 'r3', 'r4', 'r5', 'r6']" :key="n"><Ic :n="n" /></span></nav>
        <div class="panes">
          <div class="pane p1">
            <div class="ohead"><Ic n="left" /><Ic n="right" /><Tx class="ttl" t="추후 처리 예정 목록_20250623" /><Ic n="book" /><Ic n="dots" /></div>
            <div class="scroll">
              <div class="note">
                <h1><Tx t="추후 처리 예정 목록_20250623" /></h1>
                <div class="quote"><Tx t="A100 자동 발송 개발 이후 처리할 목록" /></div>
                <Tasks :list="topA" />
                <div class="quote q2"><Tx t="SR 운영 배포 시 제거할 항목" /></div>
                <Tasks :list="topB" />
              </div>
              <div class="track"><i /></div>
            </div>
          </div>
          <div class="obar low">
            <div class="otabs">
              <span class="otab nosep"><Tx t="SR Test" /></span>
              <span class="otab on"><Tx t="20250623" /><Ic n="x" /></span>
              <span class="otab"><Tx t="STAT_CD" /></span>
              <span class="otab"><Tx t="사건 초기화 쿼리" /></span>
              <span class="otab"><Tx t="테스트 환경 계정" /></span>
            </div>
            <Ic n="plus" /><Ic n="thin" />
          </div>
          <div class="pane p2">
            <div class="ohead"><Ic n="left" /><Ic n="right" /><Tx class="ttl" t="20250623" /><Ic n="book" /><Ic n="dots" /></div>
            <div class="scroll">
              <div class="note">
                <h1><Tx t="20250623" /></h1>
                <Tasks :list="bottom" />
                <div class="code">
                  <span class="lang2">TypeScript-JSX</span>
                  <Ic n="fold" /><span class="mono">&lt;<em>input</em></span><span class="mono el2">…</span>
                </div>
                <div class="hr" />
              </div>
              <div class="track"><i /></div>
            </div>
          </div>
        </div>
      </div>
      <div class="status"><Tx t="0개 백링크" /><Ic n="edit" /><Tx t="239개 단어" /><Tx t="1,377개 문자" /></div>
    </section>

    <section class="win chrome">
      <div class="strip">
        <span class="lights"><i class="r" /><i class="y" /><i class="g" /></span>
        <div v-for="t in tabs" :key="t.t" class="tab" :class="{ on: t.on, nosep: t.nosep }">
          <span class="fav"><Ic v-if="t.icon" :n="t.icon" /><span v-else class="emo">{{ t.emoji }}</span></span>
          <span class="lab" :class="{ fade: t.fade }"><Tx :t="t.t" /></span>
          <Ic n="x" />
        </div>
        <Ic n="plus" />
        <span class="drop"><Ic n="down" /></span>
      </div>
      <div class="tools">
        <Ic n="left" /><Ic n="right" /><Ic n="reload" />
        <div class="omni">
          <span class="site"><Ic n="tune" /></span>
          <span class="addr"><b>notion.so</b>/bankle/API-d88e3b18964c49f1a867a028f8075f21</span>
          <Ic n="zoomout" /><Ic n="star" />
        </div>
        <span class="cell c1"><Ic n="camera" /></span>
        <span class="cell c2"><Ic n="puzzle" /></span>
        <i class="vs" />
        <span class="cell c3"><Ic n="download" /></span>
        <span class="cell c4"><Ic n="avatar" /></span>
        <span class="cell c5"><Ic n="kebab" /></span>
      </div>
      <div class="marks">
        <Ic n="apps" /><i class="vs" />
        <span v-for="m in marks" :key="m.t" class="mark" :class="{ dir: m.icon === 'folder' }" :style="{ width: m.w + 'px' }">
          <span class="fav"><Ic v-if="m.icon" :n="m.icon" /><span v-else class="emo">{{ m.emoji }}</span></span>
          <Tx :t="m.t" />
        </span>
        <Ic n="more" />
      </div>

      <div class="view">
        <aside class="side">
          <div class="ws"><Ic n="bankle" /><b>Bankclear</b><Ic n="nchev" /><span class="grow" /><Ic n="compose" /></div>
          <div class="nav"><span class="ni"><Ic n="search" /></span><Tx t="검색" /></div>
          <div class="nav"><span class="ni"><Ic n="nhome" /></span><Tx t="홈" /></div>
          <div class="nav"><span class="ni"><Ic n="inbox" /></span><Tx t="수신함" /></div>
          <div class="list">
            <div class="sec s1"><Tx t="즐겨찾기" /></div>
            <div class="nav"><span class="ni"><Ic n="ufo" /></span><Tx t="차세대 이슈대응" /></div>
            <div class="sec s2"><Tx t="개인 페이지" /></div>
            <div v-for="n in personal" :key="n.t" class="nav">
              <span class="ni"><Ic v-if="n.icon" :n="n.icon" /><span v-else class="emo">{{ n.emoji }}</span></span><Tx :t="n.t" />
            </div>
            <div class="sec s3"><Tx t="팀스페이스" /></div>
            <div v-for="n in team" :key="n.t" class="nav" :class="'lv' + n.lv">
              <span class="ni"><Ic v-if="n.icon" :n="n.icon" /><span v-else class="emo">{{ n.emoji }}</span></span><Tx :t="n.t" />
            </div>
            <i class="thumb" />
          </div>
          <div class="foot"><Ic n="clock23" /><Ic n="send" /><span class="grow" /><Ic n="help" /></div>
        </aside>

        <main class="page">
          <div class="crumbs">
            <Ic n="house" /><Tx t="전체" class="c-a" /><s>/</s><span class="c-b">...</span><s>/</s>
            <span class="ball" /><Tx t="ANBU 문서 정리" class="c-c" /><s>/</s><Ic n="page" /><span class="c-d">API</span>
            <span class="grow" />
            <Tx t="1년 전 편집" class="edited" /><Tx t="공유" class="share" /><Ic n="comment" /><Ic n="nstar" /><Ic n="dots" />
          </div>
          <article>
            <svg class="hero" viewBox="0 0 98 116">
              <defs>
                <linearGradient id="curl" x1="0" y1="1" x2="1" y2="0"><stop offset="0" stop-color="#9a9a9a" /><stop offset=".55" stop-color="#fafafa" /><stop offset="1" stop-color="#cfcfcf" /></linearGradient>
                <linearGradient id="sheet" x1="0" y1="0" x2="0" y2="1"><stop offset="0" stop-color="#d2d2d2" /><stop offset="1" stop-color="#ececec" /></linearGradient>
                <radialGradient id="shade"><stop offset="0" stop-color="#111" stop-opacity=".95" /><stop offset=".5" stop-color="#333" stop-opacity=".7" /><stop offset="1" stop-color="#555" stop-opacity="0" /></radialGradient>
                <clipPath id="clip"><path d="M0 0h46c9 1 14 9 17 18l27 22c5 5 8 11 8 20v56H0z" /></clipPath>
              </defs>
              <g clip-path="url(#clip)">
                <rect width="98" height="116" fill="url(#sheet)" />
                <path d="M8 11h16M8 22h52M8 28h50M8 34h54M8 39h56M8 45h70M8 51h78M8 56h72M8 67h79M8 73h74M8 78h76M8 84h70M8 95h14M8 101h26" stroke="#a2a2a2" stroke-width="1.200" stroke-dasharray="7 1 4 1" />
                <ellipse cx="76" cy="40" rx="38" ry="24" fill="url(#shade)" />
                <ellipse cx="56" cy="14" rx="16" ry="30" fill="url(#shade)" />
              </g>
              <path d="M58 8c5 8 4 19 3 30 10-3 20-2 29 4C86 30 70 18 58 8z" fill="url(#curl)" />
            </svg>
            <h1>API</h1>
            <div class="sub"><Ic n="doc" /><Tx t="칼럼 설명" /></div>
            <div class="sub"><Ic n="doc" /><Tx t="API Docs" /></div>
            <div class="grid">
              <div class="tbl">
                <div class="tr th"><span>Category</span><span>description</span><span>URI</span><span>Method</span></div>
                <div v-for="r in rows" :key="r[1]" class="tr" :class="{ em: r[5] }">
                  <span class="cat">{{ r[0] }}</span>
                  <span><Tx class="u" :t="r[1]" /></span>
                  <span class="uri"><span class="u">{{ r[2] }}<template v-if="r[3]">{<em>{{ r[3] }}</em>}</template></span></span>
                  <span class="m">{{ r[4] }}</span>
                </div>
              </div>
              <div class="addcol"><Ic n="plus" /></div>
            </div>
          </article>
          <i class="pthumb" />
          <span class="ai"><Ic n="face" /></span>
        </main>
      </div>
    </section>
  </div>
</template>

<style>
body { margin: 0; background: #10120d; }
.ko { letter-spacing: -0.06em; }
.tx { white-space: pre; }
.ic { display: block; flex: none; overflow: visible; }
.obs .ko { letter-spacing: -0.05em; }
.task { position: relative; display: flex; align-items: flex-start; padding: 2px 0 2px 14px; }
.p2 .task { padding-bottom: 2.25px; }
.task .box { flex: none; box-sizing: border-box; width: 29px; height: 29px; margin: 8px 14px 0 0; border: 1.5px solid #6a6a6a; border-radius: 8px; }
.task.sub { padding-left: 80px; }
.task.sub .box { margin-right: 13px; }
.task.sub::before { content: ''; position: absolute; left: 27px; top: 0; bottom: 0; width: 1px; background: #383838; }
.task .foldmark { position: absolute; left: -15px; top: 15px; color: #a68af9; }
.ic-fold { width: 12px; height: 17px; }
.task .body { line-height: 44px; white-space: nowrap; }
.task .wide { letter-spacing: -.014em; }
.task .hl { background: #72622a; padding: 0 1px; margin-left: -1px; }
.task .el { color: #666; margin-left: 16px; font-size: 27px; }
.task .sp { text-decoration: underline dotted #c9453a 3px; text-underline-offset: 4px; text-decoration-skip-ink: none; }
.task .dim { color: #666; }
.task .lk { color: #a68af9; }
.task .url { color: #a68af9; text-decoration: underline 2px; text-underline-offset: 4px; text-decoration-skip-ink: none; }
.task .ic-ext { display: inline-block; width: 23px; height: 23px; color: #8c8c8c; vertical-align: -5px; margin-left: 3px; }
</style>

<style scoped>
.desk { position: relative; width: 3840px; height: 2160px; overflow: hidden; background: #10120d; font-family: Inter, "Noto Sans CJK KR", sans-serif; color: #d4d4d4; }
i, em, s { font-style: normal; text-decoration: none; }
.grow { flex: 1; }
.emo { font-family: "Noto Color Emoji", sans-serif; letter-spacing: 0; white-space: nowrap; }

.menubar { display: flex; align-items: center; height: 48px; box-sizing: border-box; padding: 0 37px 0 41px; gap: 41px; font-size: 26px; line-height: 48px; color: #fff; background: linear-gradient(90deg, #4a4d3f 0, #4b5045 1260px, #48493b 1900px, #45463a 2600px, #383d36 3840px); text-shadow: 0 1px 4px rgba(0, 0, 0, .35); }
.menubar .ic-apple { width: 26px; height: 31px; margin-top: -2px; }
.menubar .app { font-weight: 600; letter-spacing: .01em; }
.menubar .grow { margin-right: -41px; }
.menubar .ic-mchev { width: 12px; height: 24px; margin-right: 6px; }
.menubar .ic-mwin { width: 32px; height: 26px; margin-right: 5px; }
.lang { width: 44px; height: 32px; border-radius: 5px; background: #eee; color: #383a33; font-size: 25px; line-height: 31px; text-align: center; text-shadow: none; font-weight: 500; margin-right: 2px; }
.menubar .ic-wifi { width: 36px; height: 26px; margin-right: -4px; }
.menubar .ic-search { width: 28px; height: 28px; margin-right: -2px; }
.menubar .ic-control { width: 38px; height: 28px; margin-right: -14px; }
.clock { letter-spacing: .025em; width: 281px; }

.win { position: absolute; top: 50px; height: 2108px; overflow: hidden; box-sizing: border-box; }

/* browser */
.chrome { left: 0; width: 2560px; border-radius: 22px 22px 20px 20px; background: #191919; box-shadow: 0 0 0 1px #000, 0 0 60px rgba(0, 0, 0, .6); }
.chrome::after { content: ''; position: absolute; inset: 0; border: 2px solid #5c5e5d; border-color: #6a6c6b #505050 #505050; border-radius: inherit; pointer-events: none; }
.strip { position: relative; z-index: 1; display: flex; height: 80px; background: #1f2120; font-size: 24px; line-height: 30px; color: #d0d0d0; }
.lights { display: flex; align-items: center; gap: 16px; width: 137px; padding-left: 42px; margin-top: 2px; height: 78px; }
.lights i { width: 24px; height: 24px; border-radius: 50%; }
.lights .r { background: #ec6a5e; }
.lights .y { background: #f4bf4f; }
.lights .g { background: #61c554; }
.tab { position: relative; display: flex; align-items: center; width: 238px; height: 80px; box-sizing: border-box; padding-left: 22px; }
.tab::after { content: ''; position: absolute; right: -2px; top: 24px; width: 4px; height: 32px; border-radius: 2px; background: #3d3f3e; }
.tab.nosep::after { display: none; }
.fav { flex: none; width: 32px; height: 32px; display: flex; align-items: center; justify-content: center; font-size: 26px; line-height: 32px; }
.fav .ic { max-width: 30px; height: 30px; }
.fav .ic-page { height: 32px; width: 27px; margin-left: -1px; }
.fav .ic-folder { height: 26px; width: 32px; max-width: 32px; }
.tab .fav { margin-right: 16px; }
.lab { width: 104px; overflow: hidden; white-space: nowrap; letter-spacing: -.03em; }
.lab.fade { width: 100px; margin-right: 4px; -webkit-mask-image: linear-gradient(90deg, #000 60%, transparent 98%); mask-image: linear-gradient(90deg, #000 60%, transparent 98%); }
.tab > .ic-x { width: 17px; height: 17px; margin-left: 19px; }
.tab.on::before { content: ''; position: absolute; left: 6px; right: 6px; top: 12px; bottom: 0; background: #3c3c3c; border-radius: 20px 20px 0 0; }
.tab.on > * { position: relative; }
.strip > .ic-plus { width: 21px; height: 21px; margin: 30px 0 0 25px; }
.drop { width: 56px; height: 56px; margin: 12px 0 0 125px; border-radius: 20px; background: #3c3c3c; display: flex; align-items: center; justify-content: center; color: #eee; }
.drop .ic { width: 17px; height: 12px; }
.tools { display: flex; align-items: center; height: 92px; box-sizing: border-box; background: #3c3c3c; color: #c7c7c7; padding-left: 31px; }
.tools > .ic-left, .tools > .ic-right { color: #838383; width: 26px; height: 24px; margin-right: 46px; }
.tools > .ic-reload { width: 25px; height: 25px; margin-left: 1px; }
.omni { display: flex; align-items: center; width: 1900px; height: 68px; margin-left: 39px; box-sizing: border-box; border-radius: 34px; background: #282828; padding: 0 33px 0 10px; }
.site { width: 48px; height: 48px; border-radius: 50%; background: #3c3c3c; display: flex; align-items: center; justify-content: center; color: #e3e3e3; }
.addr { flex: 1; margin-left: 16px; font-size: 28px; line-height: 40px; letter-spacing: .003em; color: #c9c9c9; }
.addr b { font-weight: 400; color: #eee; }
.omni .ic { width: 29px; height: 29px; }
.omni .site .ic { width: 25px; height: 23px; }
.omni > .ic-star { margin-left: 34px; width: 31px; height: 31px; }
.cell { display: flex; justify-content: center; align-items: center; width: 40px; }
.cell .ic { height: 30px; }
.c1 { margin-left: 32px; }
.c2 { margin-left: 34px; }
.c2 .ic { width: 34px; height: 36px; margin-top: -6px; }
.vs { width: 3px; height: 32px; border-radius: 2px; background: #606060; }
.tools .vs { margin: 0 32px 0 31px; }
.c3 .ic { height: 46px; width: 32px; margin-top: 12px; }
.c4 { margin-left: 32px; }
.c4 .ic { width: 33px; height: 33px; }
.c5 { margin-left: 32px; }
.marks { display: flex; align-items: center; box-sizing: border-box; height: 70px; padding: 0 0 12px 38px; border-bottom: 2px solid #4a4a4a; background: #3c3c3c; font-size: 24px; line-height: 32px; color: #c7c7c7; }
.marks > .ic-apps { width: 28px; height: 28px; }
.marks .vs { margin: 0 33px 0 31px; }
.mark { display: flex; align-items: center; gap: 12px; white-space: nowrap; flex: none; }
.mark.dir { gap: 15px; }
.marks > .ic-more { width: 20px; height: 18px; margin-left: 162px; }
.view { display: flex; height: 1866px; }

.side { position: relative; width: 360px; box-sizing: border-box; border-right: 2px solid #2a2a2a; background: #202020; display: flex; flex-direction: column; font-size: 21px; line-height: 30px; font-weight: 500; color: #9b9b9b; }
.ws { display: flex; align-items: center; height: 61.500px; padding: 3px 22px 0 26px; color: #d4d4d4; flex: none; }
.ws .ic-bankle { width: 29px; height: 12px; margin-right: 14px; }
.ws b { font-weight: 600; letter-spacing: -.02em; }
.ws .ic-nchev { width: 14px; height: 9px; margin-left: 14px; color: #8a8a8a; }
.ws .ic-compose { width: 25px; height: 25px; }
.nav { display: flex; align-items: center; height: 46.500px; padding-left: 25px; white-space: nowrap; flex: none; }
.ni { flex: none; width: 30px; height: 30px; margin-right: 14px; display: flex; align-items: center; justify-content: center; font-size: 22px; color: #8a8a8a; }
.ni .ic { width: 26px; height: 26px; }
.ni .ic-search { width: 25px; height: 25px; }
.ni .ic-doc { width: 21px; height: 25px; }
.ni .ic-pencil { width: 22px; height: 22px; }
.ni .ic-inbox { width: 27px; height: 23px; }
.ni .ic-house { width: 30px; height: 30px; }
.ni .ic-kos { width: 21px; height: 21px; }
.ni .ic-turtle { width: 21px; height: 18px; }
.lv0 { padding-left: 24px; }
.lv1 { padding-left: 37px; }
.lv2 { padding-left: 49.500px; }
.list { position: relative; flex: 1; overflow: hidden; }
.sec { height: 46.500px; line-height: 46.500px; padding-left: 24.500px; font-size: 18px; color: #8e8e8e; }
.s1 { margin-top: 20px; }
.s2 { margin-top: 23px; }
.s3 { margin-top: 21.500px; }
.thumb { position: absolute; left: 338px; top: 20px; width: 16px; height: 1206px; border-radius: 8px; background: #4c4c4c; }
.foot { display: flex; align-items: center; height: 70px; flex: none; border-top: 2px solid #2c2c2c; padding: 0 26px 0 26px; color: #8c8c8c; }
.foot .ic { width: 25px; height: 25px; }
.foot .ic-send { margin-left: 24px; }

.page { position: relative; flex: 1; background: #191919; }
.crumbs { display: flex; align-items: center; height: 65px; padding: 0 28px 0 21px; font-size: 21px; line-height: 30px; font-weight: 500; color: #d4d4d4; letter-spacing: -.02em; }
.crumbs s { width: 10px; color: #4c4c4c; text-align: center; font-weight: 400; }
.crumbs .ic-house { width: 30px; height: 30px; }
.c-a { width: 36px; margin: 0 9px; }
.c-b { width: 19px; margin: 0 9px 0 12px; letter-spacing: 0; }
.ball { width: 27px; height: 27px; margin: 0 10px 0 12px; border-radius: 50%; background: radial-gradient(ellipse at 50% 8%, #a6cdf8 0, #3a74dc 45%, #1c36a8 100%); }
.c-c { width: 140px; margin-right: 12px; }
.crumbs .ic-page { width: 23px; height: 27px; margin: 0 12px 0 12px; }
.edited { color: #5c5c5c; font-weight: 400; margin-right: 22px; }
.share { margin-right: 29px; }
.crumbs .ic-comment { width: 25px; height: 26px; margin-top: 2px; }
.crumbs .ic-nstar { width: 26px; height: 26px; margin: 0 28px; }
.crumbs .ic-dots { width: 26px; height: 6px; }
article { height: 1801px; padding: 145px 0 0 553px; overflow: hidden; box-sizing: border-box; }
.hero { display: block; width: 98px; height: 116px; margin-left: 9px; }
article h1 { margin: 67px 0 0 -2px; height: 72px; font-size: 59px; line-height: 72px; font-weight: 700; letter-spacing: -.035em; color: #d6d6d6; }
.sub { display: flex; align-items: center; height: 48.500px; font-size: 24px; line-height: 30px; font-weight: 500; letter-spacing: -.02em; }
h1 + .sub { margin-top: 24px; }
.sub .ic { width: 23px; height: 28px; margin: 0 13px 0 7px; color: #8e8e8e; }
.sub .tx { border-bottom: 2px solid #3c3c3c; line-height: 28px; margin-top: 2px; }
.grid { display: flex; gap: 2px; margin-top: 13px; }
.tbl { width: 1211px; border-left: 2px solid #2b2b2b; border-top: 2px solid #2f2f2f; box-sizing: border-box; font-size: 21px; }
.tr { display: grid; grid-template-columns: 198px 359px 492px 160px; height: 52px; line-height: 51px; color: #9b9b9b; }
.tr > span { border-right: 2px solid #2b2b2b; border-bottom: 2px solid #2b2b2b; padding-left: 13.500px; box-sizing: border-box; white-space: nowrap; }
.tr > span:first-child { padding-left: 12px; }
.tr.th { background: #202020; color: #d8d8d8; font-weight: 500; letter-spacing: -.01em; }
.tr .cat { color: #d8d8d8; font-weight: 600; }
.tr .m { color: #d4d4d4; letter-spacing: -.02em; }
.u { text-decoration: underline 1.500px #5a5a5a; text-underline-offset: 5px; text-decoration-skip-ink: none; }
.uri { letter-spacing: -.026em; }
.uri em { color: #957038; text-decoration: inherit; }
.tr.em { color: #e0e0e0; }
.tr.em .u { text-decoration: none; font-weight: 500; }
.tr.em .uri .u { font-weight: 400; -webkit-text-stroke: .3px; }
.tr.em em { color: #d09a45; }
.addcol { width: 24px; background: #242424; border-radius: 8px 8px 0 0; color: #777; }
.addcol .ic { width: 15px; height: 15px; margin: 1188px auto 0; }
.pthumb { position: absolute; left: 2180px; top: 73px; width: 15px; height: 900px; border-radius: 8px; background: #474747; }
.ai { position: absolute; left: 2092px; top: 1760px; width: 54px; height: 54px; border-radius: 50%; background: #d6d6d6; box-shadow: 0 2px 8px #000; }
.ai .ic { width: 54px; height: 54px; }

/* notes app */
.obs { left: 2561px; width: 1279px; border-radius: 22px; background: #1e1e1e; font-size: 24px; color: #dadada; }
.obs::before { content: ''; position: absolute; z-index: 2; inset: 0; border: 2px solid #474747; border-top-color: #6a6a6a; border-radius: inherit; pointer-events: none; }
.obar { display: flex; background: #262626; border-bottom: 2px solid #363636; box-sizing: border-box; color: #b0b0b0; }
.obar.top { height: 73px; padding-left: 25px; }
.gray { display: flex; gap: 16px; width: 146px; margin-top: 24px; }
.gray i { width: 24px; height: 24px; border-radius: 50%; background: #464646; }
.obar > .ic-sideL, .obar > .ic-sideR { width: 32px; height: 27px; margin-top: 23px; color: #a0a0a0; }
.obar.top .otabs { margin-left: 29px; }
.otabs { display: flex; align-items: flex-end; }
.otab { position: relative; width: 210px; height: 60px; box-sizing: border-box; padding-left: 18px; display: flex; align-items: center; color: #6b6b6b; white-space: nowrap; letter-spacing: -.02em; line-height: 30px; }
.otab::after { content: ''; position: absolute; right: 0; top: 11px; height: 37px; width: 1px; background: #404040; }
.otab.nosep::after { display: none; }
.top .otab:nth-child(2) { padding-left: 16px; letter-spacing: -.04em; }
.otab.on { width: 213px; height: 61px; margin-bottom: -2px; background: #1e1e1e; border: 2px solid #363636; border-bottom: 0; border-radius: 12px 12px 0 0; color: #dadada; padding-left: 16px; }
.otab.on::after { display: none; }
.otab .ic-x { position: absolute; right: 19px; width: 18px; height: 18px; color: #c0c0c0; }
.obar > .ic-plus { width: 22px; height: 22px; margin: 26px 0 0 23px; color: #a0a0a0; }
.obar > .ic-thin { width: 20px; height: 12px; margin: 32px 0 0 48px; color: #a0a0a0; }
.obar > .ic-sideR { margin-left: 34px; }
.obody { display: flex; height: 2035px; }
.ribbon { width: 79px; box-sizing: border-box; border-right: 2px solid #333; background: linear-gradient(90deg, #161616, #1f1f1f); color: #959595; padding-top: 9px; }
.ribbon span { display: flex; align-items: center; justify-content: center; height: 58.400px; padding-right: 1px; }
.ribbon .ic { width: 29px; height: 30px; }
.ribbon .ic-r6 { width: 26px; height: 22px; }
.panes { flex: 1; min-width: 0; }
.pane { display: flex; flex-direction: column; overflow: hidden; }
.p1 { height: 979px; }
.p2 { height: 983px; }
.ohead { position: relative; display: flex; align-items: center; height: 68px; flex: none; padding: 0 36px 0 38px; color: #b4b4b4; }
.ohead .ic-left, .ohead .ic-right { width: 20px; height: 20px; color: #5e5e5e; }
.ohead .ic-right { margin-left: 31px; }
.ttl { flex: 1; text-align: center; letter-spacing: -.022em; line-height: 30px; margin-left: 2px; }
.ohead .ic-book { width: 27px; height: 25px; color: #a0a0a0; }
.ohead .ic-dots { width: 22px; height: 6px; margin-left: 27px; color: #a0a0a0; }
.scroll { display: flex; flex: 1; min-height: 0; }
.note { flex: 1; padding: 48px 0 0 58px; font-size: 29px; letter-spacing: -.021em; min-width: 0; overflow: hidden; }
.track { width: 29px; box-sizing: border-box; border-left: 2px solid #333; background: #2b2b2b; flex: none; }
.track i { display: block; width: 16px; margin: 6px 0 0 5px; height: 675px; border-radius: 8px; background: #696969; }
.note h1 { margin: 9px 0 0; height: 66px; font-size: 52.500px; line-height: 66px; font-weight: 700; letter-spacing: -.023em; color: #dadada; }
.quote { margin-top: 25px; height: 44px; line-height: 44px; box-sizing: border-box; border-left: 3px solid #8a5cf5; padding-left: 23px; }
.quote.q2 { margin-top: 86px; }
.quote.q2 + .task { margin-top: -1px; }
.obar.low { height: 74px; border-top: 2px solid #363636; padding-left: 32px; }
.low .otab { width: 203px; padding-left: 14px; }
.low .otab.on { width: 206px; padding-left: 16px; height: 61px; }
.low .otab:first-child { width: 204px; padding-left: 17px; }
.low > .ic-plus { margin: 21px 0 0 24px; }
.low > .ic-thin { margin: 28px 0 0 48px; }
.p2 .track i { height: 346px; }
.p2 .note h1 { margin-top: 9px; margin-bottom: 25px; }
.code { position: relative; display: flex; align-items: center; height: 115px; width: 1054px; background: #242424; border-radius: 8px; box-sizing: border-box; padding-left: 5px; margin-left: -1px; color: #a68af9; }
.lang2 { position: absolute; right: 26px; top: 20px; font-size: 22.500px; line-height: 30px; letter-spacing: -.01em; color: #b3b3b3; }
.mono { font-family: "DejaVu Sans Mono", monospace; font-size: 25.500px; letter-spacing: 0; line-height: 34px; color: #b3b3b3; margin-left: 13px; }
.mono em { color: #e5534b; }
.el2 { color: #777; margin-left: 46px; }
.hr { height: 3px; background: #363636; margin-top: 107px; }
.status { position: absolute; z-index: 1; right: 0; bottom: 0; display: flex; align-items: center; width: 450px; height: 47px; box-sizing: border-box; padding-left: 15px; background: #262626; border: 2px solid #363636; border-radius: 12px 0 0 0; font-size: 22.500px; line-height: 30px; color: #b3b3b3; white-space: nowrap; }
.status .ic { width: 25px; height: 25px; margin: 0 24px; }
.status .tx:last-child { margin-left: 18px; }
.status .tx { letter-spacing: -.025em; }
</style>
